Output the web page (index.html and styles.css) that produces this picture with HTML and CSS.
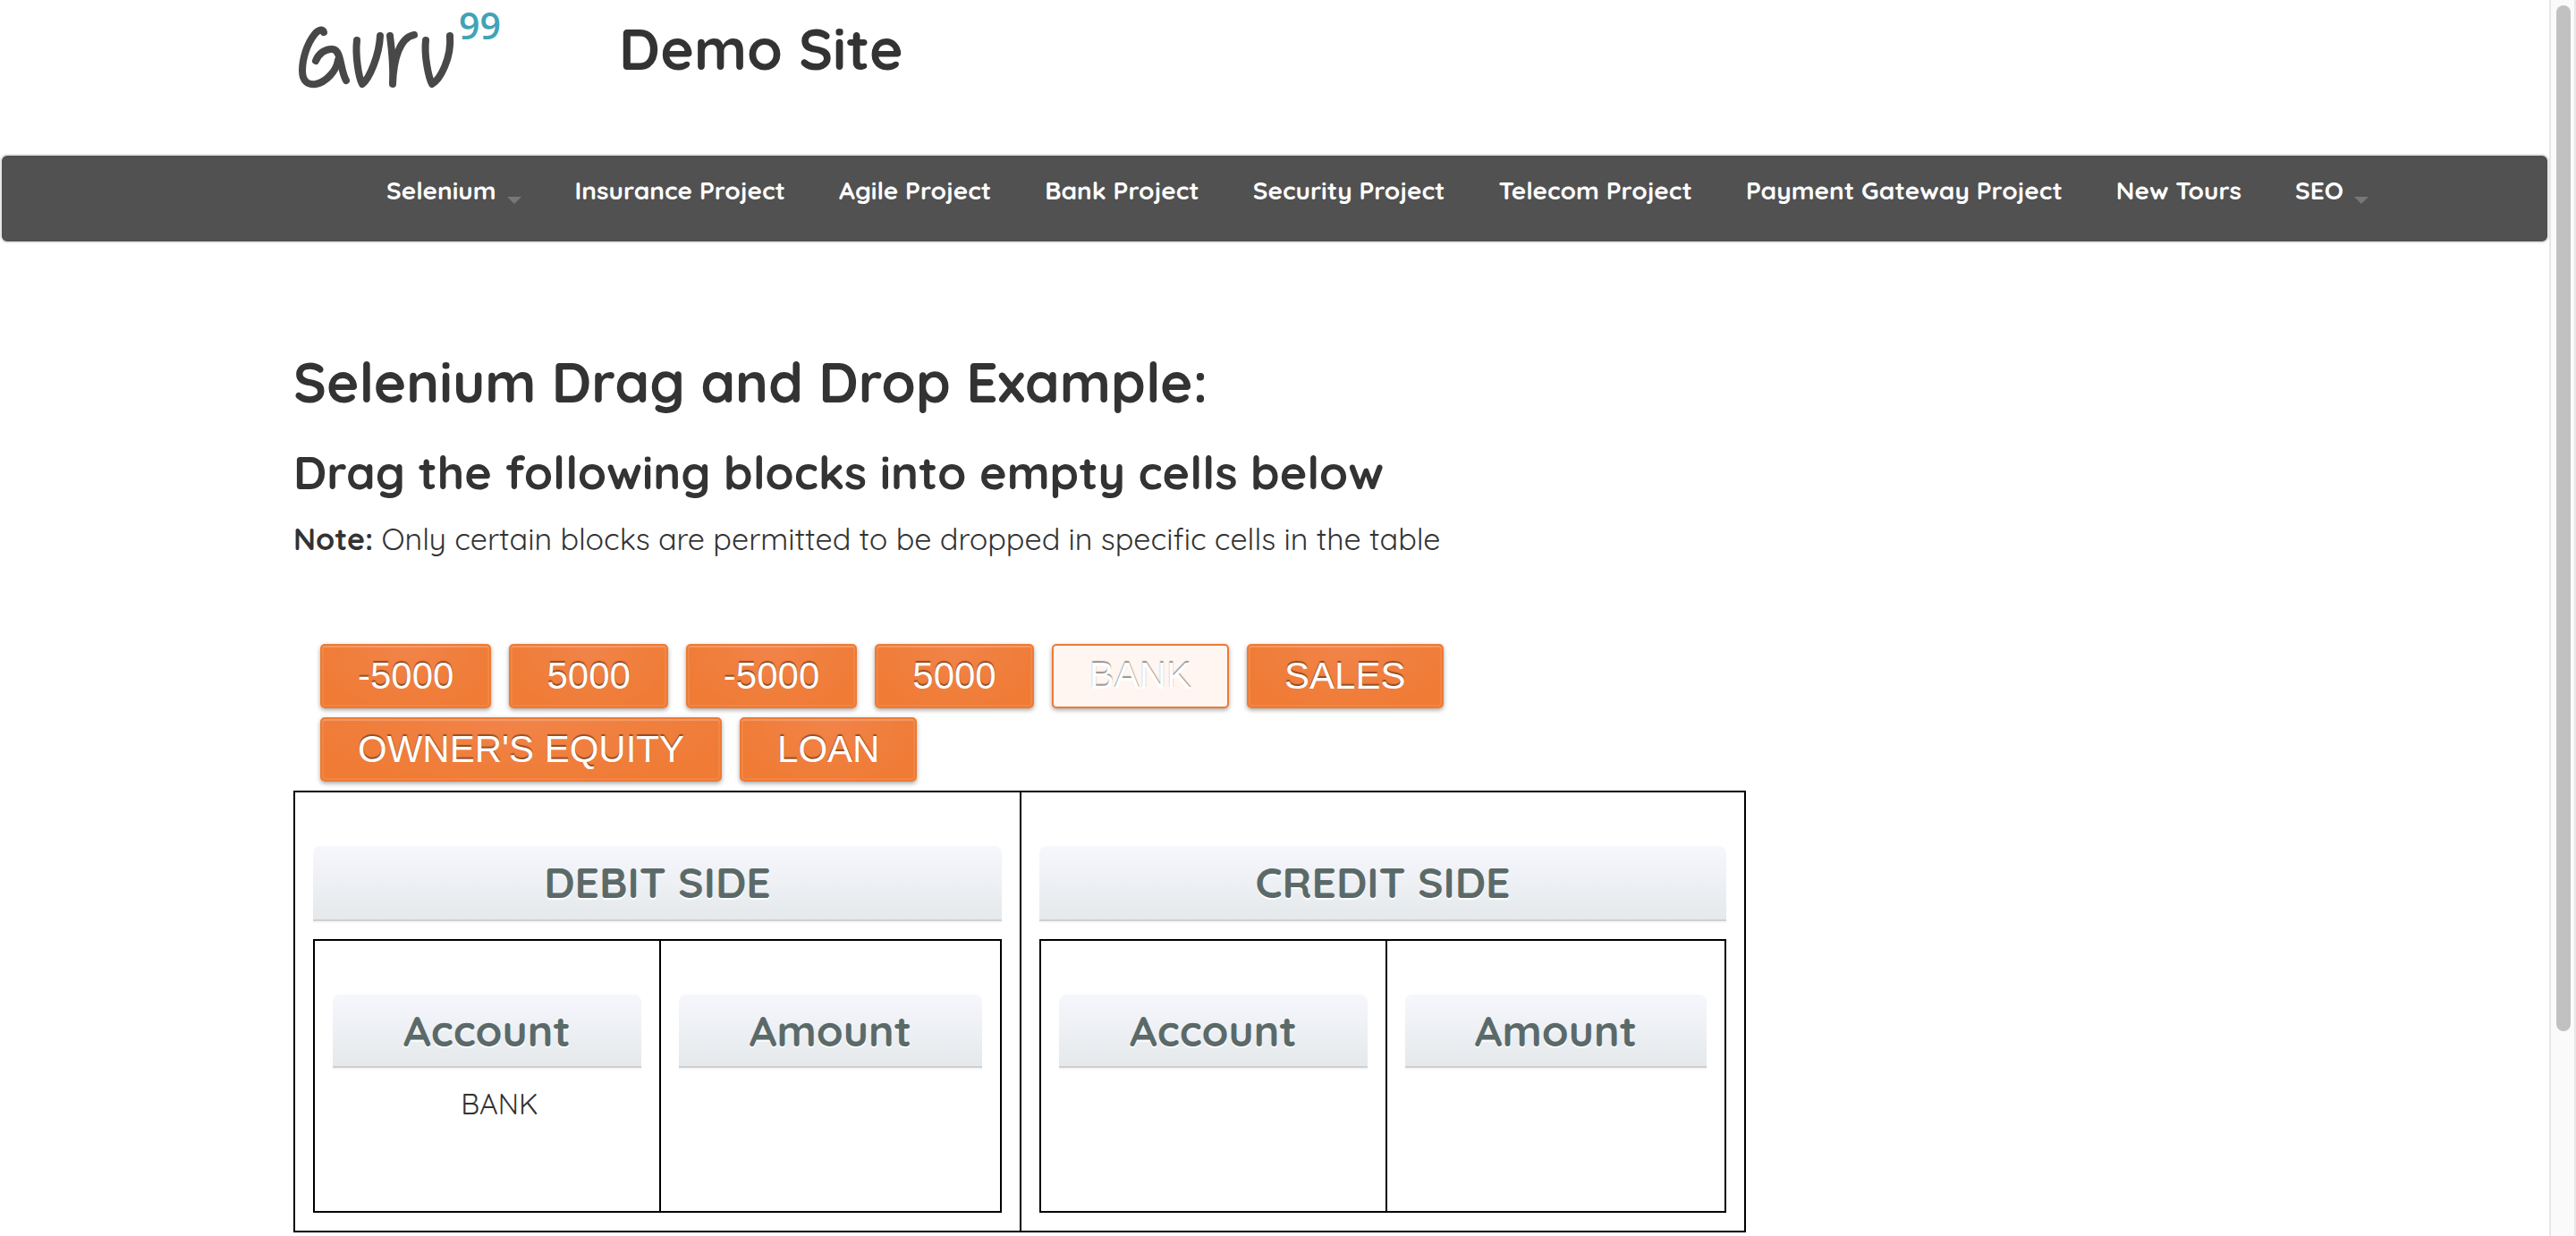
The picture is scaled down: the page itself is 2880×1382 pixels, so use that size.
FILE: index.html
```html
<!DOCTYPE html>
<html lang="en">
<head>
<meta charset="utf-8">
<title>Guru99 Demo Site</title>
<link rel="stylesheet" href="styles.css">
</head>
<body>
<div class="viewport">
  <div class="page">
    <header class="header container">
      <a class="logo" href="#" aria-label="Guru99">
        <svg width="240" height="110" viewBox="328 0 240 110">
          <g fill="none" stroke="#484848" stroke-width="8" stroke-linecap="round" stroke-linejoin="round">
            <path d="M362 36C361 32 356 33 352 38C343 49 338 66 338 79C338 92 345 95 353 94C364 92 376 80 378 67"/>
            <path d="M353 68C356 60 364 54 372 55C382 56 380 78 387 90"/>
            <path d="M399 45C397 62 401 87 405 94C413 88 424 62 425 40"/>
            <path d="M436 40C438 55 440 75 439 94C440 66 447 42 463 39"/>
            <path d="M476 45C474 62 479 86 483 94C492 89 505 65 503 40"/>
          </g>
          <text class="logo-number" x="513" y="44">99</text>
        </svg>
      </a>
      <div class="site-name">Demo Site</div>
    </header>

    <nav class="navbar">
      <ul class="menu">
        <li><a href="#">Selenium<span class="caret"></span></a></li>
        <li><a href="#">Insurance Project</a></li>
        <li><a href="#">Agile Project</a></li>
        <li><a href="#">Bank Project</a></li>
        <li><a href="#">Security Project</a></li>
        <li><a href="#">Telecom Project</a></li>
        <li><a href="#">Payment Gateway Project</a></li>
        <li><a href="#">New Tours</a></li>
        <li><a href="#">SEO<span class="caret"></span></a></li>
      </ul>
    </nav>

    <main class="container">
      <h1>Selenium Drag and Drop Example:</h1>
      <h2>Drag the following blocks into empty cells below</h2>
      <p class="note"><b>Note:</b> Only certain blocks are permitted to be dropped in specific cells in the table</p>

      <div class="blocks">
        <button class="block" type="button">-5000</button>
        <button class="block" type="button">5000</button>
        <button class="block" type="button">-5000</button>
        <button class="block" type="button">5000</button>
        <button class="block block-used" type="button">BANK</button>
        <button class="block" type="button">SALES</button>
        <button class="block" type="button">OWNER'S EQUITY</button>
        <button class="block" type="button">LOAN</button>
      </div>

      <div class="ledger">
        <section class="side">
          <h3 class="band">DEBIT SIDE</h3>
          <table class="entries">
            <tr>
              <td class="account"><h3 class="band">Account</h3><div class="drop">BANK</div></td>
              <td><h3 class="band">Amount</h3><div class="drop"></div></td>
            </tr>
          </table>
        </section>
        <section class="side">
          <h3 class="band">CREDIT SIDE</h3>
          <table class="entries">
            <tr>
              <td class="account"><h3 class="band">Account</h3><div class="drop"></div></td>
              <td><h3 class="band">Amount</h3><div class="drop"></div></td>
            </tr>
          </table>
        </section>
      </div>
    </main>
  </div>
  <div class="scrollbar"><div class="thumb"></div></div>
</div>
</body>
</html>
```
FILE: styles.css
```css
* { box-sizing: border-box; }

body {
  margin: 0;
  background: #fff;
  color: #333;
  font-family: Quicksand, Lato, sans-serif;
  font-size: 34px;
}

.viewport {
  display: grid;
  grid-template-columns: minmax(0, 1fr) 30px;
  min-height: 100vh;
}

.container {
  max-width: 2194px;
  margin: 0 auto;
}

.header {
  display: flex;
  gap: 124px;
  height: 172px;
}

.logo svg { display: block; }

.logo-number {
  fill: #41a3b5;
  font: 600 41px "Open Sans", sans-serif;
}

.site-name {
  padding-top: 14px;
  font-size: 64px;
  font-weight: 700;
  line-height: 80px;
}

.navbar {
  height: 100px;
  padding: 19px 0 0 430px;
  background: #515151;
  border: 2px solid #e7e7e7;
  border-radius: 8px;
}

.menu {
  display: flex;
  gap: 60px;
  margin: 0;
  padding: 0;
  list-style: none;
}

.menu a {
  display: flex;
  align-items: flex-start;
  color: #fff;
  font-size: 28px;
  font-weight: 700;
  line-height: 40px;
  text-decoration: none;
  white-space: nowrap;
}

.caret {
  margin: 27px 0 0 12px;
  border: 8px solid transparent;
  border-top-color: #777;
  border-bottom: 0;
}

h1, h2, h3, p { margin: 0; }

h1 {
  padding-top: 115px;
  font-size: 62px;
  line-height: 80px;
}

h2 {
  padding-top: 29px;
  font-size: 52px;
  line-height: 64px;
}

.note {
  padding-top: 19px;
  font-size: 34px;
  line-height: 48px;
}

.blocks {
  display: flex;
  flex-wrap: wrap;
  gap: 10px 20px;
  max-width: 1330px;
  padding: 93px 0 10px 30px;
}

.block {
  height: 72px;
  padding: 0 40px;
  border: 2px solid #ee7a33;
  border-radius: 5px;
  background: radial-gradient(ellipse at 50% 0, #f28449, #ef7b35 80%);
  box-shadow: inset 0 2px 1px rgba(255, 255, 255, .15), inset 0 0 0 2px rgba(255, 255, 255, .08), 0 2px 5px rgba(0, 0, 0, .35);
  color: #fff;
  font: 42px "Liberation Sans", Arial, sans-serif;
  text-shadow: 0 -2px 1px rgba(0, 0, 0, .4);
}

.block-used { background: #fff5f1; }

.ledger {
  display: grid;
  grid-template-columns: 812px 810px;
  width: fit-content;
  border: 2px solid #000;
  border-left-width: 0;
}

.side {
  padding: 60px 20px 20px;
  border-left: 2px solid #000;
}

.band {
  height: 84px;
  border-bottom: 2px solid #cfcfcf;
  border-radius: 8px 8px 0 0;
  background: linear-gradient(#f6f7fd, #e5e9eb);
  box-shadow: 0 2px 0 #f6f6f6;
  color: #5b6a69;
  font-size: 48px;
  line-height: 80px;
  text-align: center;
  text-shadow: 0 2px 0 #fff;
}

.entries {
  width: 100%;
  margin-top: 20px;
  border-collapse: collapse;
}

.entries td {
  padding: 60px 20px 0;
  border: 2px solid #000;
  vertical-align: top;
}

.entries .account { width: 387px; }

.entries .band { height: 82px; }

.drop {
  height: 160px;
  padding: 16px 0 0 28px;
  font-size: 32px;
  line-height: 48px;
  text-align: center;
}

.scrollbar {
  padding: 6px 4px 0 6px;
  background: #fafafa;
  border: solid #e7e7e7;
  border-width: 0 2px;
}

.thumb {
  width: 16px;
  height: 83vh;
  border-radius: 8px;
  background: #c1c1c1;
}
```
